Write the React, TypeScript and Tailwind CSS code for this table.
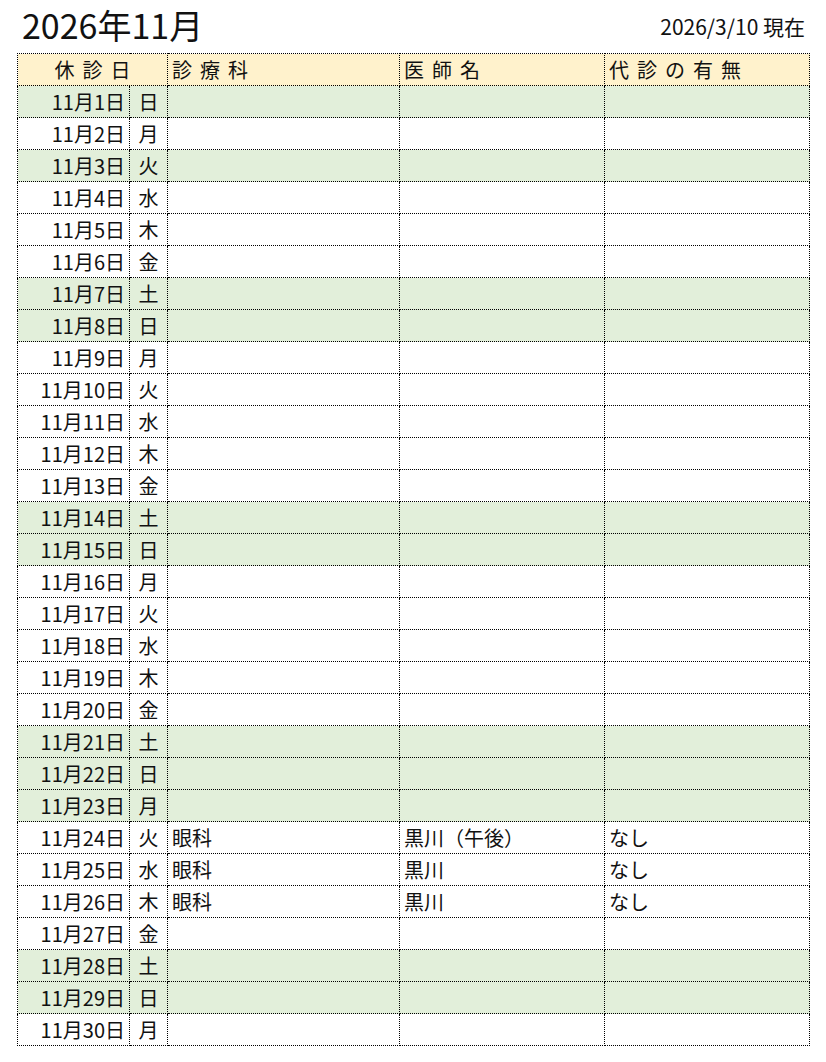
const weekdays = ["日", "月", "火", "水", "木", "金", "土"];
const holidays = [3, 23];

const entries: Record<number, { dept: string; doctor: string; sub: string }> = {
  24: { dept: "眼科", doctor: "黒川（午後）", sub: "なし" },
  25: { dept: "眼科", doctor: "黒川", sub: "なし" },
  26: { dept: "眼科", doctor: "黒川", sub: "なし" },
};

const cell = "border border-dotted border-black";

export default function App() {
  const days = Array.from({ length: 30 }, (_, i) => i + 1);

  return (
    <div
      className="w-[826px] h-[1062px] bg-white text-[#111]"
      style={{ fontFamily: '"Noto Sans CJK JP", "Noto Sans", sans-serif' }}
    >
      <div className="flex items-start justify-between pl-[22px] pr-[21px] h-[53px]">
        <h1 className="text-[34px] leading-[49px]">2026年11月</h1>
        <span className="text-[21px] leading-[30px] mt-[11px]">2026/3/10 現在</span>
      </div>

      <table className="ml-[17px] w-[793px] table-fixed border-collapse text-[20px]">
        <colgroup>
          <col className="w-[112px]" />
          <col className="w-[38px]" />
          <col className="w-[232px]" />
          <col className="w-[205px]" />
          <col />
        </colgroup>
        <thead>
          <tr className="h-[32px] bg-[#fff2cc]">
            <th colSpan={2} className={`${cell} font-normal text-center tracking-[0.4em] pl-[8px] leading-none`}>
              休診日
            </th>
            <th className={`${cell} font-normal text-left tracking-[0.4em] pl-[4px] leading-none`}>診療科</th>
            <th className={`${cell} font-normal text-left tracking-[0.4em] pl-[4px] leading-none`}>医師名</th>
            <th className={`${cell} font-normal text-left tracking-[0.4em] pl-[4px] leading-none`}>代診の有無</th>
          </tr>
        </thead>
        <tbody>
          {days.map((d) => {
            const w = (d - 1) % 7;
            const green = w === 0 || w === 6 || holidays.includes(d);
            const e = entries[d];
            return (
              <tr key={d} className={`h-[32px] ${green ? "bg-[#e2efda]" : "bg-white"}`}>
                <td className={`${cell} text-right pr-[4px] leading-none`}>11月{d}日</td>
                <td className={`${cell} text-center leading-none`}>{weekdays[w]}</td>
                <td className={`${cell} pl-[4px] leading-none`}>{e?.dept}</td>
                <td className={`${cell} pl-[4px] leading-none`}>{e?.doctor}</td>
                <td className={`${cell} pl-[4px] leading-none`}>{e?.sub}</td>
              </tr>
            );
          })}
        </tbody>
      </table>
    </div>
  );
}
